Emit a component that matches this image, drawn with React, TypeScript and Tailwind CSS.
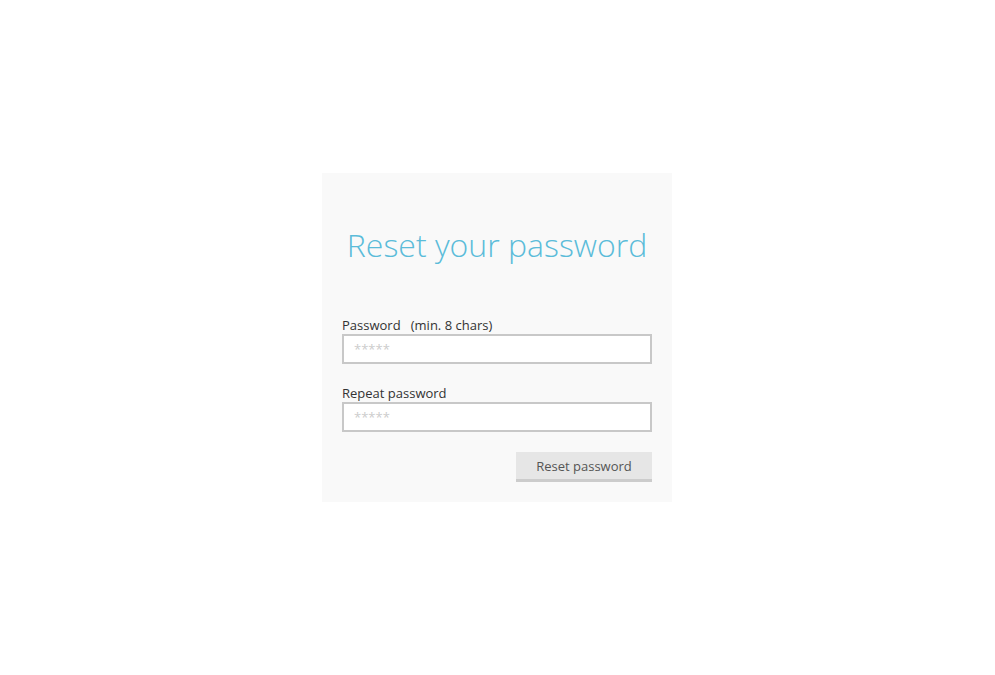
import React from "react";

export default function App() {
  return (
    <div className="w-[995px] h-[675px] bg-white pt-[173px]" style={{ fontFamily: '"Open Sans", sans-serif' }}>
      <div className="ml-[322px] w-[350px] bg-[#f9f9f9] px-[20px] pt-[50px] pb-[20px]">
        <h1 className="text-center text-[32px] leading-[44px] font-light text-[#5bbcd9]">Reset your password</h1>
        <div className="mt-[49px]">
          <label className="block text-[13px] leading-[18px] text-[#333]">
            Password&nbsp;&nbsp;&nbsp;(min. 8 chars)
          </label>
          <input
            type="password"
            placeholder="*****"
            className="block w-[310px] h-[30px] border-2 border-[#c8c8c8] bg-white px-[10px] text-[13px] outline-none placeholder:text-[#ccc]"
          />
        </div>
        <div className="mt-[20px]">
          <label className="block text-[13px] leading-[18px] text-[#333]">Repeat password</label>
          <input
            type="password"
            placeholder="*****"
            className="block w-[310px] h-[30px] border-2 border-[#c8c8c8] bg-white px-[10px] text-[13px] outline-none placeholder:text-[#ccc]"
          />
        </div>
        <div className="mt-[20px] flex justify-end">
          <button className="w-[136px] h-[30px] bg-[#e6e6e6] border-b-[3px] border-[#cccccc] text-[13px] text-[#555] leading-[27px]">
            <span className="relative top-[1px]">Reset password</span>
          </button>
        </div>
      </div>
    </div>
  );
}
